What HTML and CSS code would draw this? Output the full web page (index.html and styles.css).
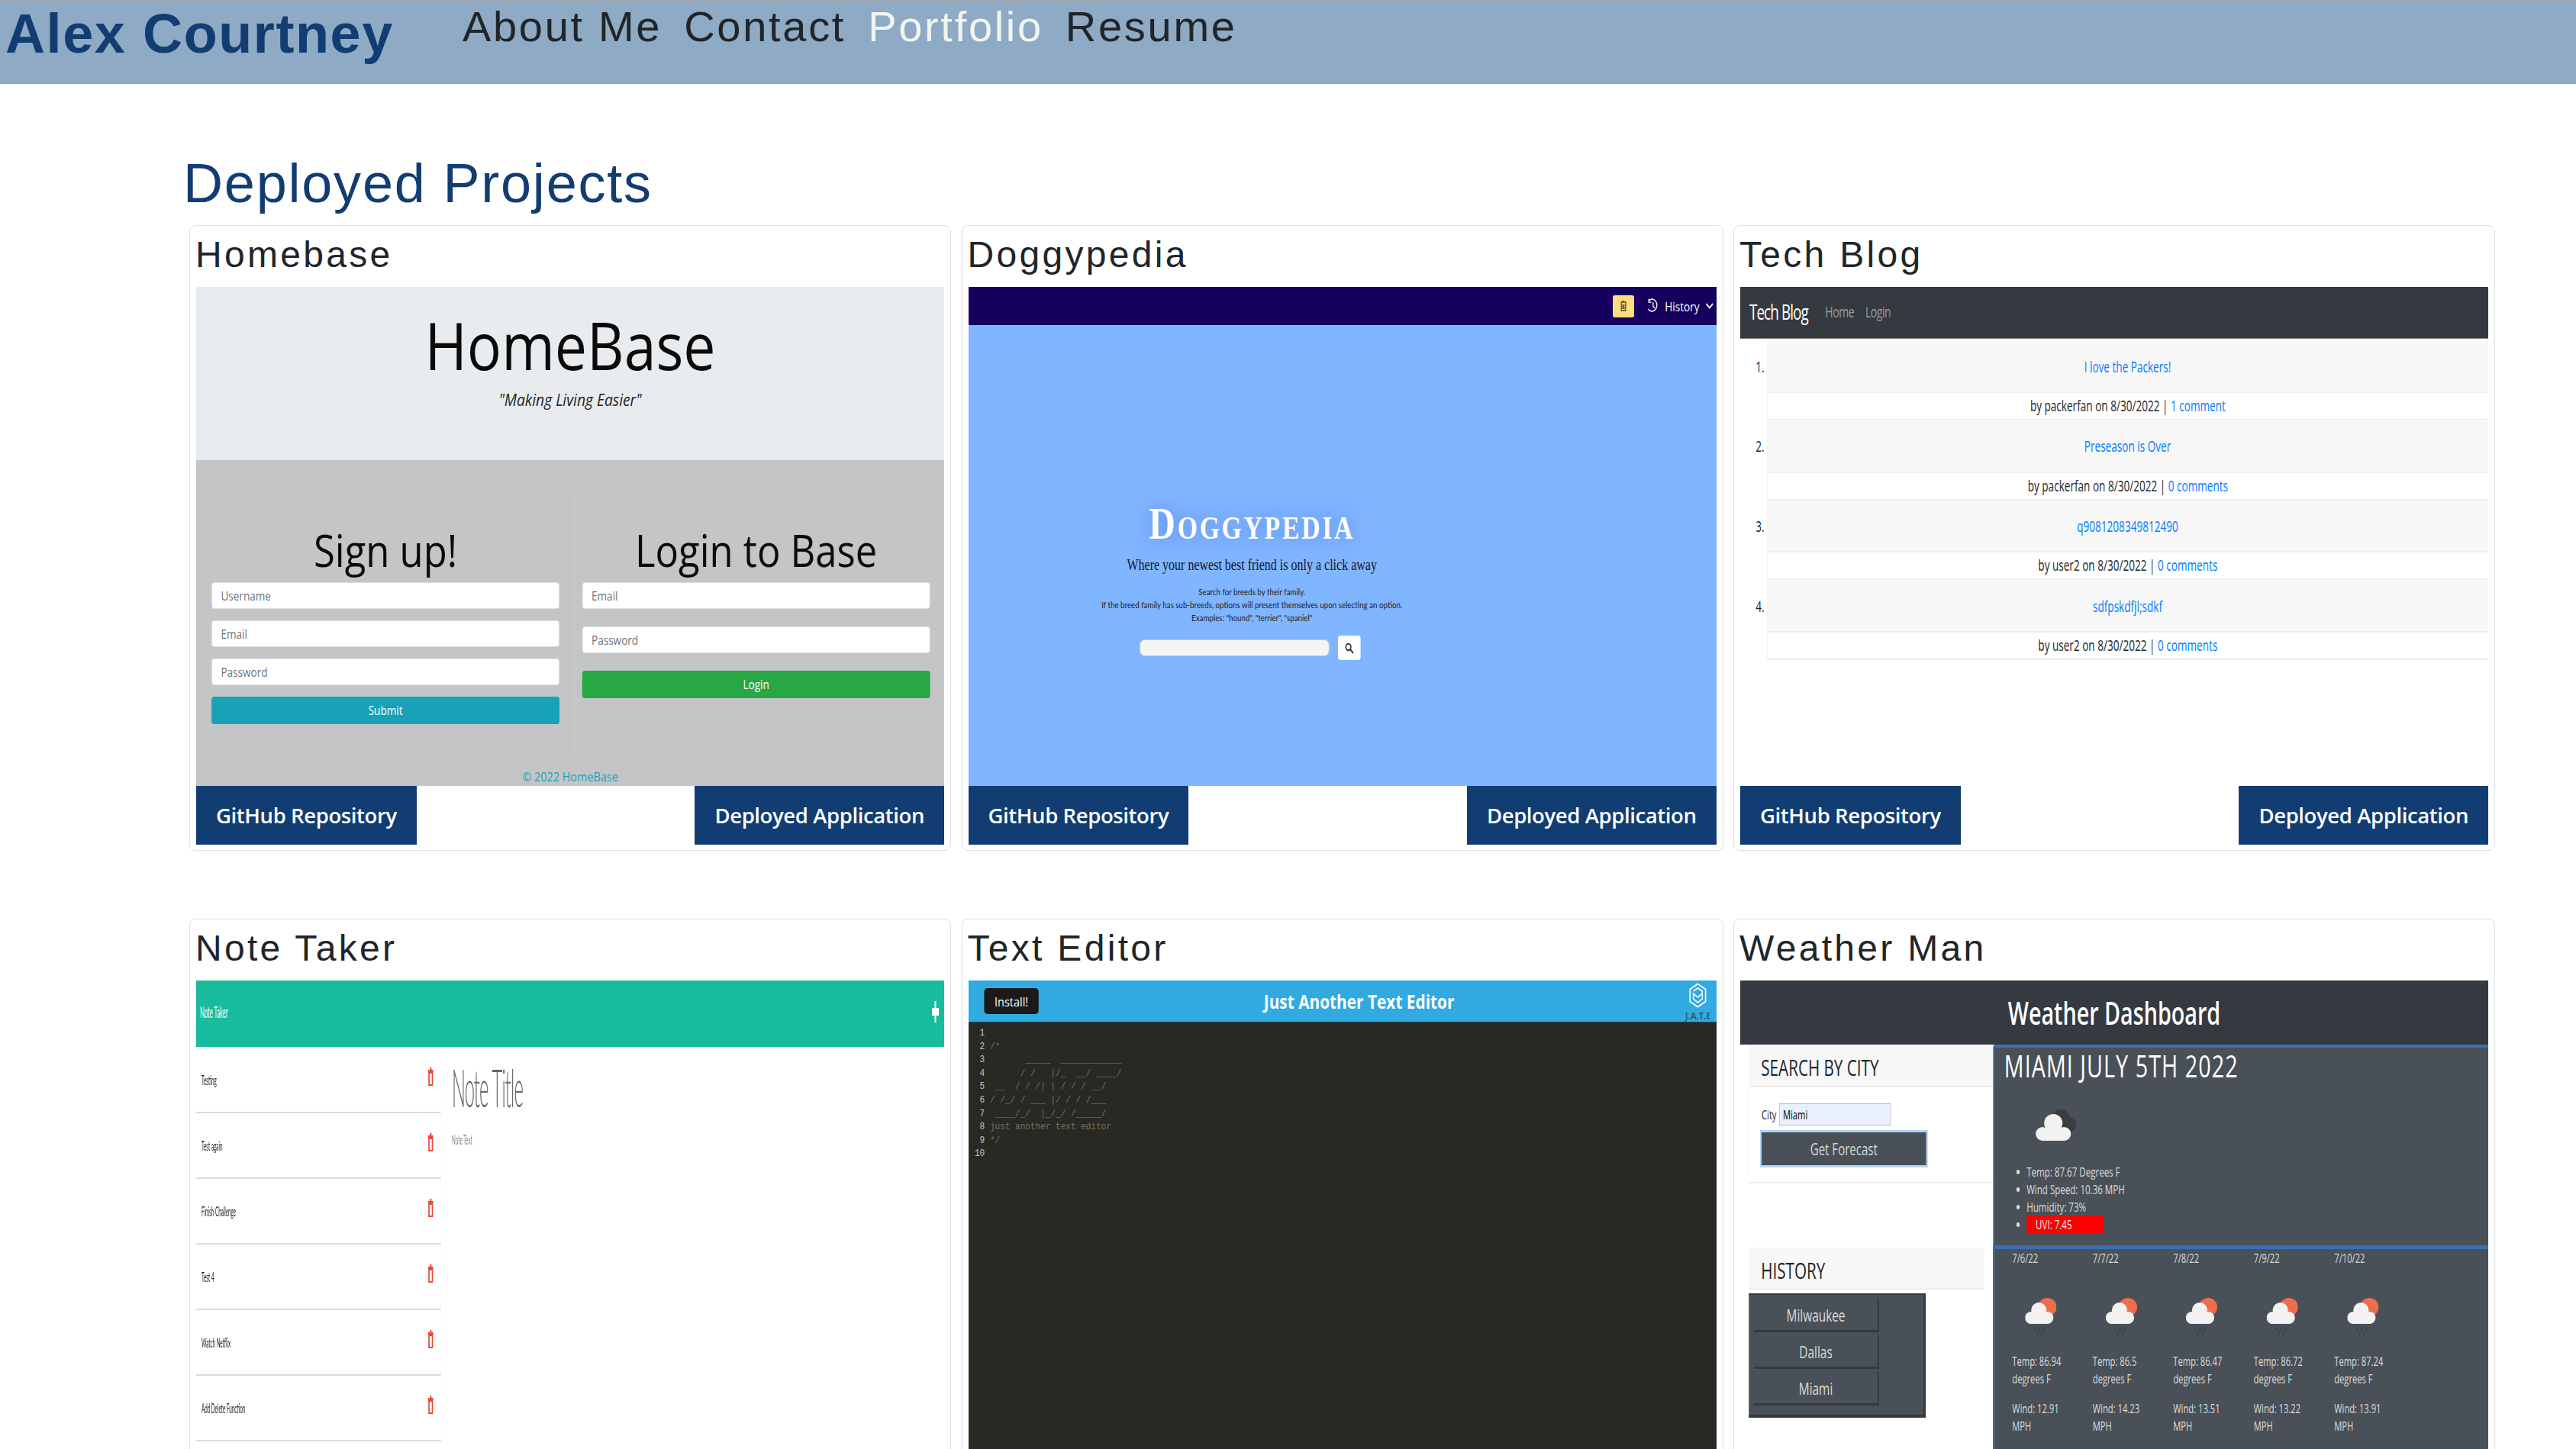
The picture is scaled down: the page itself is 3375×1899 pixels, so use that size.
FILE: index.html
```html
<!DOCTYPE html>
<html>

<head>
    <meta charset="utf-8">
    <title>Alex Courtney - Portfolio</title>
    <link rel="stylesheet" href="styles.css">
</head>

<body>
    <svg class="icon-defs" width="0" height="0">
        <symbol id="rain-cloud" viewBox="0 0 41 50" preserveAspectRatio="none">
            <circle cx="29" cy="13" r="12" fill="#ec6e4c"/>
            <circle cx="8" cy="27" r="8" fill="#f2f2f2"/>
            <circle cx="18" cy="17" r="10" fill="#f2f2f2"/>
            <circle cx="29" cy="27" r="8" fill="#f2f2f2"/>
            <rect x="6" y="22" width="24" height="13" fill="#f2f2f2"/>
            <path d="M14 39l-2 5M20 39l-2 5M26 39l-2 5M17 45l-2 5M23 45l-2 5" stroke="#3a3f45" stroke-width="1.2"/>
        </symbol>
    </svg>

    <header class="site-header">
        <a class="brand">Alex Courtney</a>
        <nav class="site-nav">
            <a>About Me</a>
            <a>Contact</a>
            <a class="active">Portfolio</a>
            <a>Resume</a>
        </nav>
    </header>

    <main class="page">
        <h2 class="page-title">Deployed Projects</h2>

        <div class="projects">

            <section class="card">
                <h3>Homebase</h3>
                <div class="preview">
                    <div class="screen home">
                        <div class="home-top">
                            <div class="home-name">HomeBase</div>
                            <div class="home-tag">"Making Living Easier"</div>
                        </div>
                        <div class="home-main">
                            <div class="home-forms">
                                <form class="home-form signup">
                                    <h4>Sign up!</h4>
                                    <input placeholder="Username">
                                    <input placeholder="Email">
                                    <input placeholder="Password">
                                    <button type="button" class="btn-submit">Submit</button>
                                </form>
                                <form class="home-form login">
                                    <h4>Login to Base</h4>
                                    <input placeholder="Email">
                                    <input placeholder="Password">
                                    <button type="button" class="btn-login">Login</button>
                                </form>
                            </div>
                            <div class="home-foot">© 2022 HomeBase</div>
                        </div>
                    </div>
                </div>
                <div class="links">
                    <a class="link-btn">GitHub Repository</a>
                    <a class="link-btn">Deployed Application</a>
                </div>
            </section>

            <section class="card">
                <h3>Doggypedia</h3>
                <div class="preview">
                    <div class="screen dog">
                        <div class="dog-bar">
                            <span class="dog-trash">
                                <svg width="11" height="14" viewBox="0 0 11 14"><path d="M1 2h9M4 1h3M2 3v10h7V3M4.5 5v6M6.5 5v6" fill="none" stroke="#4a4020" stroke-width="1.5"/></svg>
                            </span>
                            <svg class="dog-clock" width="19" height="20" viewBox="0 0 19 20"><path d="M3 3a8 8 0 1 1-1 11M3 1v4h4M10 5v5l3 3" fill="none" stroke="#fff" stroke-width="1.6"/></svg>
                            <span class="dog-history">History</span>
                            <svg width="13" height="8" viewBox="0 0 13 8"><path d="M1 1l5.500 5.500L12 1" fill="none" stroke="#fff" stroke-width="2"/></svg>
                        </div>
                        <div class="dog-main">
                            <div class="dog-title">Doggypedia</div>
                            <div class="dog-tag">Where your newest best friend is only a click away</div>
                            <p class="dog-help">Search for breeds by their family.<br>If the breed family has sub-breeds, options will present themselves upon selecting an option.<br>Examples: "hound", "terrier", "spaniel"</p>
                            <div class="dog-search">
                                <input class="dog-input">
                                <span class="dog-go">
                                    <svg width="15" height="15" viewBox="0 0 15 15"><circle cx="6" cy="6" r="4.200" fill="none" stroke="#333" stroke-width="2"/><path d="M9 9l5 5" stroke="#333" stroke-width="2.400"/></svg>
                                </span>
                            </div>
                        </div>
                    </div>
                </div>
                <div class="links">
                    <a class="link-btn">GitHub Repository</a>
                    <a class="link-btn">Deployed Application</a>
                </div>
            </section>

            <section class="card">
                <h3>Tech Blog</h3>
                <div class="preview">
                    <div class="screen blog">
                        <div class="blog-nav">
                            <span class="blog-brand">Tech Blog</span>
                            <a>Home</a>
                            <a>Login</a>
                        </div>
                        <ol class="blog-list">
                            <li>
                                <div class="blog-head"><a>I love the Packers!</a></div>
                                <div class="blog-meta">by packerfan on 8/30/2022 | <a>1 comment</a></div>
                            </li>
                            <li>
                                <div class="blog-head"><a>Preseason is Over</a></div>
                                <div class="blog-meta">by packerfan on 8/30/2022 | <a>0 comments</a></div>
                            </li>
                            <li>
                                <div class="blog-head"><a>q9081208349812490</a></div>
                                <div class="blog-meta">by user2 on 8/30/2022 | <a>0 comments</a></div>
                            </li>
                            <li>
                                <div class="blog-head"><a>sdfpskdfjl;sdkf</a></div>
                                <div class="blog-meta">by user2 on 8/30/2022 | <a>0 comments</a></div>
                            </li>
                        </ol>
                    </div>
                </div>
                <div class="links">
                    <a class="link-btn">GitHub Repository</a>
                    <a class="link-btn">Deployed Application</a>
                </div>
            </section>

            <section class="card">
                <h3>Note Taker</h3>
                <div class="preview">
                    <div class="screen notes">
                        <div class="notes-bar">
                            <span>Note Taker</span>
                            <svg width="26" height="28" viewBox="0 0 26 28"><path d="M10 0h6v28h-6z" fill="#fff"/><path d="M0 9h26v10H0z" fill="#fff"/></svg>
                        </div>
                        <div class="notes-body">
                            <ul class="notes-list">
                                <li>Testing <svg class="note-del" width="20" height="24" viewBox="0 0 20 24"><path d="M7 0h6v3H7zM0 3h20v3H0zM1 6h18v18H1zM6 8v14h8V8z" fill="#e74c3c" fill-rule="evenodd"/></svg></li>
                                <li>Test again <svg class="note-del" width="20" height="24" viewBox="0 0 20 24"><path d="M7 0h6v3H7zM0 3h20v3H0zM1 6h18v18H1zM6 8v14h8V8z" fill="#e74c3c" fill-rule="evenodd"/></svg></li>
                                <li>Finish Challenge <svg class="note-del" width="20" height="24" viewBox="0 0 20 24"><path d="M7 0h6v3H7zM0 3h20v3H0zM1 6h18v18H1zM6 8v14h8V8z" fill="#e74c3c" fill-rule="evenodd"/></svg></li>
                                <li>Test 4 <svg class="note-del" width="20" height="24" viewBox="0 0 20 24"><path d="M7 0h6v3H7zM0 3h20v3H0zM1 6h18v18H1zM6 8v14h8V8z" fill="#e74c3c" fill-rule="evenodd"/></svg></li>
                                <li>Watch Netflix <svg class="note-del" width="20" height="24" viewBox="0 0 20 24"><path d="M7 0h6v3H7zM0 3h20v3H0zM1 6h18v18H1zM6 8v14h8V8z" fill="#e74c3c" fill-rule="evenodd"/></svg></li>
                                <li>Add Delete Function <svg class="note-del" width="20" height="24" viewBox="0 0 20 24"><path d="M7 0h6v3H7zM0 3h20v3H0zM1 6h18v18H1zM6 8v14h8V8z" fill="#e74c3c" fill-rule="evenodd"/></svg></li>
                            </ul>
                            <div class="notes-edit">
                                <div class="notes-title">Note Title</div>
                                <div class="notes-text">Note Text</div>
                            </div>
                        </div>
                    </div>
                </div>
            </section>

            <section class="card">
                <h3>Text Editor</h3>
                <div class="preview">
                    <div class="screen editor">
                        <div class="editor-bar">
                            <button type="button" class="editor-install">Install!</button>
                            <div class="editor-name">Just Another Text Editor</div>
                            <div class="editor-logo">
                                <svg width="28" height="33" viewBox="0 0 28 33"><path d="M14 1.500l12 7v16l-12 7-12-7v-16z" fill="none" stroke="#fff" stroke-width="2"/><path d="M7 11l7-4 7 4v10l-7 5-7-5v-7l7 5 7-5" fill="none" stroke="#fff" stroke-width="1.600"/></svg>
                                <span>J.A.T.E</span>
                            </div>
                        </div>
<pre class="editor-code"><span class="ln">1</span>
<span class="ln">2</span> /*
<span class="ln">3</span>        _____  ____________
<span class="ln">4</span>       / /   |/_  __/ ____/
<span class="ln">5</span>  __  / / /| | / / / __/
<span class="ln">6</span> / /_/ / ___ |/ / / /___
<span class="ln">7</span>  ____/_/  |_/_/ /_____/
<span class="ln">8</span> just another text editor
<span class="ln">9</span> */
<span class="ln">10</span></pre>
                    </div>
                </div>
            </section>

            <section class="card">
                <h3>Weather Man</h3>
                <div class="preview">
                    <div class="screen weather">
                        <div class="weather-head">Weather Dashboard</div>
                        <div class="weather-body">
                            <div class="weather-side">
                                <div class="side-head">SEARCH BY CITY</div>
                                <div class="side-form">
                                    <div class="city-row">
                                        <label>City</label>
                                        <input value="Miami">
                                    </div>
                                    <button type="button" class="forecast-btn">Get Forecast</button>
                                </div>
                                <div class="side-head history-head">HISTORY</div>
                                <div class="history">
                                    <button type="button">Milwaukee</button>
                                    <button type="button">Dallas</button>
                                    <button type="button">Miami</button>
                                </div>
                            </div>
                            <div class="weather-panels">
                                <div class="today">
                                    <div class="today-city">MIAMI JULY 5TH 2022</div>
                                    <svg class="today-icon" width="76" height="41" viewBox="0 0 53 41" preserveAspectRatio="none">
                                        <circle cx="33" cy="11" r="11" fill="#3a3d42"/>
                                        <circle cx="43" cy="20" r="10" fill="#3a3d42"/>
                                        <circle cx="9" cy="32" r="9" fill="#f2f2f2"/>
                                        <circle cx="23" cy="18" r="12" fill="#f2f2f2"/>
                                        <circle cx="37" cy="32" r="9" fill="#f2f2f2"/>
                                        <rect x="8" y="26" width="30" height="15" fill="#f2f2f2"/>
                                    </svg>
                                    <ul class="today-list">
                                        <li>Temp: 87.67 Degrees F</li>
                                        <li>Wind Speed: 10.36 MPH</li>
                                        <li>Humidity: 73%</li>
                                        <li><span class="uvi">UVI: 7.45</span></li>
                                    </ul>
                                </div>
                                <div class="days">
                                    <div class="day">
                                        <div>7/6/22</div>
                                        <svg class="day-icon" width="59" height="50"><use href="#rain-cloud" width="59" height="50"/></svg>
                                        <p>Temp: 86.94 degrees F</p>
                                        <p>Wind: 12.91 MPH</p>
                                    </div>
                                    <div class="day">
                                        <div>7/7/22</div>
                                        <svg class="day-icon" width="59" height="50"><use href="#rain-cloud" width="59" height="50"/></svg>
                                        <p>Temp: 86.5 degrees F</p>
                                        <p>Wind: 14.23 MPH</p>
                                    </div>
                                    <div class="day">
                                        <div>7/8/22</div>
                                        <svg class="day-icon" width="59" height="50"><use href="#rain-cloud" width="59" height="50"/></svg>
                                        <p>Temp: 86.47 degrees F</p>
                                        <p>Wind: 13.51 MPH</p>
                                    </div>
                                    <div class="day">
                                        <div>7/9/22</div>
                                        <svg class="day-icon" width="59" height="50"><use href="#rain-cloud" width="59" height="50"/></svg>
                                        <p>Temp: 86.72 degrees F</p>
                                        <p>Wind: 13.22 MPH</p>
                                    </div>
                                    <div class="day">
                                        <div>7/10/22</div>
                                        <svg class="day-icon" width="59" height="50"><use href="#rain-cloud" width="59" height="50"/></svg>
                                        <p>Temp: 87.24 degrees F</p>
                                        <p>Wind: 13.91 MPH</p>
                                    </div>
                                </div>
                            </div>
                        </div>
                    </div>
                </div>
            </section>

        </div>
    </main>
</body>

</html>
```

FILE: styles.css
```css
html, body {
    height: 1899px;
    overflow: hidden;
}

body {
    margin: 0;
    font-family: 'Liberation Sans', Arial, sans-serif;
    color: #212529;
    background-color: #fff;
}

.icon-defs {
    position: absolute;
}

/* site header */
.site-header {
    height: 109px;
    border-top: 1px solid #a5a9ad;
    background-color: #8eaac4;
    display: flex;
    align-items: flex-start;
}

.brand {
    margin: 2px 0 0 7px;
    font-size: 72px;
    font-weight: bold;
    letter-spacing: 1.6px;
    color: #123d72;
}

.site-nav {
    margin: 1px 0 0 90px;
    display: flex;
    gap: 29px;
    font-size: 56px;
    letter-spacing: 2.7px;
}

.site-nav .active {
    color: #f1f5f1;
}

/* page */
.page {
    padding: 89px 106px 0 240px;
}

.page-title {
    margin: 0 0 14px;
    font-size: 72px;
    font-weight: normal;
    letter-spacing: 1.8px;
    color: #123d72;
}

.projects {
    margin-left: 8px;
    display: grid;
    grid-template-columns: repeat(3, minmax(0, 1fr));
    column-gap: 13.5px;
    row-gap: 89px;
}

.card {
    box-sizing: border-box;
    height: 820px;
    padding: 9px 8px 7px;
    border: 1px solid #dfe0e3;
    border-radius: 8px;
}

.card h3 {
    margin: 1px 0 15px -1px;
    font-size: 48px;
    font-weight: normal;
    letter-spacing: 3.3px;
}

.preview {
    height: 654px;
    overflow: hidden;
}

.links {
    display: flex;
    justify-content: space-between;
}

.link-btn {
    height: 77px;
    padding: 0 26px;
    display: flex;
    align-items: center;
    background-color: #123d72;
    color: #fff;
    font-family: 'Open Sans', sans-serif;
    font-size: 27.5px;
    font-weight: 600;
    letter-spacing: -.4px;
}

/* the previews are wide pages squeezed into the card, as the screenshots were */
.screen {
    height: 654px;
    transform-origin: 0 0;
    font-family: 'Open Sans', sans-serif;
}

.home { width: 1120px; transform: scaleX(.875); }
.dog { width: 1225px; transform: scaleX(.8); }
.blog { width: 1400px; transform: scaleX(.7); }
.notes { width: 2800px; transform: scaleX(.35); font-family: Lato, sans-serif; }
.editor { width: 1153px; transform: scaleX(.85); }
.weather { width: 1400px; transform: scaleX(.7); }

/* homebase */
.home-top {
    height: 201px;
    padding-top: 26px;
    background-color: #e9ecef;
    text-align: center;
}

.home-name {
    font-size: 86px;
    line-height: 100px;
    color: #0b0b0b;
}

.home-tag {
    margin-top: 9px;
    font-size: 22px;
    line-height: 24px;
    font-style: italic;
}

.home-main {
    height: 427px;
    padding-top: 44px;
    box-sizing: border-box;
    background-color: #c4c5c7;
}

.home-forms {
    height: 346px;
    display: grid;
    grid-template-columns: 560px 560px;
}

.home-form {
    display: flex;
    flex-direction: column;
}

.home-form h4 {
    margin: 44px 0 12px;
    font-size: 58px;
    font-weight: normal;
    line-height: 60px;
    text-align: center;
    color: #0b0b0b;
}

.signup {
    padding: 0 15px 0 23px;
    border-right: 1px solid #b9babc;
    gap: 15px;
}

.signup h4 {
    margin-bottom: -3px;
}

.login {
    padding: 0 21px 0 18px;
    gap: 23px;
}

.login h4 {
    margin-bottom: -11px;
}

.home-form input {
    height: 35px;
    box-sizing: border-box;
    padding: 0 13px;
    border: 1px solid #dcdfe2;
    border-radius: 4px;
    background-color: #fff;
    font-family: 'Open Sans', sans-serif;
    font-size: 15.5px;
}

.home-form input::placeholder {
    color: #6c757d;
}

.home-form button {
    height: 36px;
    border: 0;
    border-radius: 4px;
    color: #fff;
    font-family: 'Open Sans', sans-serif;
    font-size: 15.5px;
}

.btn-submit {
    background-color: #17a2b8;
}

.btn-login {
    background-color: #28a745;
}

.home-foot {
    margin-top: 15px;
    font-size: 16.5px;
    line-height: 20px;
    text-align: center;
    color: #17a2b8;
}

/* doggypedia */
.dog-bar {
    height: 50px;
    padding-right: 5px;
    box-sizing: border-box;
    display: flex;
    justify-content: flex-end;
    align-items: center;
    background-color: #16005e;
}

.dog-trash {
    width: 35px;
    height: 29px;
    margin-right: 21px;
    display: flex;
    justify-content: center;
    align-items: center;
    background-color: #ffdc7d;
    border-radius: 3px;
}

.dog-history {
    margin: 0 10px;
    font-size: 17px;
    color: #fff;
}

.dog-main {
    width: 928px;
    height: 604px;
    padding-top: 230px;
    box-sizing: border-box;
    text-align: center;
}

.dog {
    background-color: #80b5ff;
}

.dog-title {
    font-family: 'Liberation Serif', serif;
    font-size: 60px;
    font-weight: bold;
    font-variant: small-caps;
    letter-spacing: 3.5px;
    line-height: 60px;
    color: #fff;
    text-shadow: 0 0 30px #5c82e6;
}

.dog-tag {
    margin-top: 12px;
    font-family: 'Liberation Serif', serif;
    font-size: 20px;
    line-height: 24px;
    color: #14142a;
}

.dog-help {
    margin: 15px 0 0;
    font-family: Lato, sans-serif;
    font-size: 12.2px;
    line-height: 17px;
    color: #222;
}

.dog-search {
    margin-top: 15px;
    padding-right: 6px;
    display: flex;
    justify-content: center;
    align-items: center;
    gap: 14px;
}

.dog-input {
    width: 311px;
    height: 22px;
    box-sizing: border-box;
    border: 1px solid #c4c8d0;
    border-radius: 8px;
    background-color: #f5f5f5;
}

.dog-go {
    width: 37px;
    height: 32px;
    display: flex;
    justify-content: center;
    align-items: center;
    border-radius: 4px;
    background-color: #fff;
}

/* tech blog */
.blog-nav {
    height: 68px;
    padding: 0 0 3px 17px;
    box-sizing: border-box;
    display: flex;
    align-items: center;
    gap: 21px;
    background-color: #343a40;
    border-bottom: 1px solid #777;
    font-size: 20px;
    letter-spacing: -.6px;
    color: #9a9da0;
}

.blog-brand {
    margin-right: 11px;
    font-size: 27px;
    letter-spacing: -1.3px;
    color: #fff;
}

.blog-list {
    margin: 3px 0 0;
    padding: 0 0 0 50px;
    font-size: 19.4px;
}

.blog-list li {
    height: 104.7px;
}

.blog-list a {
    color: #007bff;
}

.blog-head {
    height: 66px;
    display: flex;
    justify-content: center;
    align-items: center;
    background-color: #f7f7f7;
    border-bottom: 2px solid #eee;
}

.blog-meta {
    height: 34px;
    line-height: 34px;
    text-align: center;
    border-bottom: 2px solid #eee;
    border-left: 1px solid #eee;
    border-radius: 0 0 4px 4px;
}

/* note taker */
.notes-bar {
    height: 87px;
    padding: 0 20px 6px 14px;
    box-sizing: border-box;
    display: flex;
    justify-content: space-between;
    align-items: center;
    background-color: #18bc9c;
    font-size: 22px;
    color: #fff;
}

.notes-body {
    display: flex;
    border-top: 1px solid #e2f6f2;
}

.notes-list {
    width: 917px;
    margin: 0;
    padding: 0;
    box-sizing: border-box;
    border-right: 1px solid #eee;
    list-style: none;
    font-size: 18px;
    color: #222;
}

.notes-list li {
    height: 86px;
    padding: 0 28px 0 20px;
    box-sizing: border-box;
    display: flex;
    justify-content: space-between;
    align-items: center;
    border-bottom: 2px solid #ddd;
}

.note-del {
    margin-top: -8px;
}

.notes-edit {
    padding: 17px 0 0 40px;
}

.notes-title {
    font-size: 68px;
    font-weight: 300;
    letter-spacing: -2.5px;
    line-height: 70px;
    color: #666;
}

.notes-text {
    margin-top: 23px;
    font-size: 18px;
    line-height: 20px;
    color: #888;
}

/* text editor */
.editor-bar {
    height: 55px;
    padding: 0 9px 0 24px;
    box-sizing: border-box;
    display: flex;
    align-items: center;
    background-color: #31aae2;
    border-bottom: 1px solid #1c4a60;
}

.editor-install {
    width: 84px;
    height: 34px;
    border: 0;
    border-radius: 5px;
    background-color: #1a1a1a;
    color: #fff;
    font-family: 'Open Sans', sans-serif;
    font-size: 17px;
}

.editor-name {
    margin-left: 347px;
    font-size: 24.5px;
    font-weight: bold;
    color: #fff;
}

.editor-logo {
    margin-left: auto;
    display: flex;
    flex-direction: column;
    align-items: center;
}

.editor-logo span {
    margin-top: 6px;
    font-size: 13px;
    line-height: 9px;
    font-weight: bold;
    color: #33597a;
}

.editor-code {
    height: 599px;
    margin: 0;
    padding: 5px 0 0 0;
    box-sizing: border-box;
    background-color: #282923;
    font-family: 'Liberation Mono', monospace;
    font-size: 13px;
    line-height: 17.6px;
    color: #75715e;
}

.ln {
    display: inline-block;
    width: 25px;
    text-align: right;
    color: #c4c4c4;
}

/* weather man */
.weather-head {
    height: 84px;
    padding-top: 15px;
    box-sizing: border-box;
    background-color: #343a40;
    color: #fff;
    font-size: 41px;
    font-weight: 600;
    line-height: 54px;
    text-align: center;
}

.weather-body {
    display: flex;
}

.weather-side {
    width: 473px;
    padding-left: 16px;
    box-sizing: border-box;
}

.side-head {
    height: 56px;
    padding-left: 23px;
    box-sizing: border-box;
    background-color: #f7f7f7;
    border-bottom: 2px solid #eee;
    font-size: 29.5px;
    line-height: 59px;
    color: #212529;
}

.side-form {
    height: 126px;
    padding: 21px 0 0 23px;
    box-sizing: border-box;
    border-bottom: 2px solid #eee;
    border-left: 1px solid #eee;
    font-size: 16px;
}

.city-row {
    display: flex;
    align-items: center;
    gap: 5px;
}

.city-row input {
    width: 209px;
    height: 29px;
    padding: 0 6px;
    box-sizing: border-box;
    border: 1px solid #bbb;
    background-color: #e8f0fe;
    font-family: 'Open Sans', sans-serif;
    font-size: 16px;
}

.forecast-btn {
    width: 308px;
    height: 43px;
    margin-top: 9px;
    border: 0;
    background-color: #495057;
    box-shadow: 0 0 0 3px #b3d2f5;
    color: #d8d8d8;
    font-family: 'Open Sans', sans-serif;
    font-size: 21.5px;
}

.history-head {
    width: 440px;
    height: 55px;
    margin-top: 84px;
}

.history {
    width: 331px;
    height: 163px;
    margin-top: 5px;
    padding: 5px 0 0 10px;
    box-sizing: border-box;
    display: flex;
    flex-direction: column;
    gap: 4px;
    background-color: #495057;
    border-top: 2px solid #343a40;
    border-right: 4px solid #343a40;
    border-bottom: 4px solid #343a40;
}

.history button {
    width: 234px;
    height: 44px;
    border: 0;
    border-right: 3px solid #343a40;
    border-bottom: 3px solid #343a40;
    background-color: #495057;
    color: #ddd;
    font-family: 'Open Sans', sans-serif;
    font-size: 22px;
}

.weather-panels {
    flex: 1;
    color: #ddd;
    font-size: 16px;
}

.today {
    height: 263px;
    padding: 1px 0 0 18px;
    box-sizing: border-box;
    background-color: #495057;
    border-top: 4px solid #3a70b0;
    border-left: 3px solid #3a70b0;
    border-radius: 4px 0 0 0;
}

.today-city {
    font-size: 41px;
    letter-spacing: 1.5px;
    line-height: 44px;
    color: #fff;
}

.today-icon {
    display: block;
    margin: 36px 0 0 59px;
}

.today-list {
    margin: 29px 0 0;
    padding: 0 0 0 42px;
    font-size: 16.5px;
    line-height: 23px;
}

.uvi {
    display: block;
    width: 143px;
    padding-left: 17px;
    box-sizing: border-box;
    background-color: #f00;
    color: #eee;
}

.days {
    height: 307px;
    padding: 1px 0 0 33px;
    box-sizing: border-box;
    display: grid;
    grid-template-columns: repeat(5, 150.7px);
    background-color: #495057;
    border-top: 5px solid #3a70b0;
    border-left: 3px solid #3a70b0;
    line-height: 23.5px;
}

.day-icon {
    display: block;
    margin: 38px 0 0 24px;
}

.day p {
    width: 120px;
    margin: 23px 0 0;
}

.day p + p {
    margin-top: 15px;
}
```
